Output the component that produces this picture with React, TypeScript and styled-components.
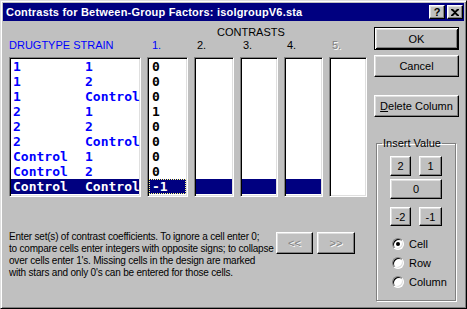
import React from 'react'
import styled, { createGlobalStyle } from 'styled-components'

const GlobalStyle = createGlobalStyle`
  html, body { margin: 0; padding: 0; background: #c0c0c0; }
  body { font-family: "Liberation Sans", Arial, sans-serif; font-size: 11px; }
  * { box-sizing: border-box; }
`

// classic 3D edges
const raisedEdge = `
  border: 1px solid;
  border-color: #fff #000 #000 #fff;
  box-shadow: inset -1px -1px #808080, inset 1px 1px #dfdfdf;
`
const sunkenEdge = `
  border: 1px solid;
  border-color: #808080 #fff #fff #808080;
  box-shadow: inset 1px 1px #000, inset -1px -1px #dfdfdf;
`

const rows: [string, string][] = [
  ['1', '1'], ['1', '2'], ['1', 'Control'],
  ['2', '1'], ['2', '2'], ['2', 'Control'],
  ['Control', '1'], ['Control', '2'], ['Control', 'Control'],
]
const firstContrast = ['0', '0', '0', '1', '0', '0', '0', '0', '-1']
const selectedRow = 8

const contrastCols = [
  { label: '1.', width: 41, values: firstContrast, highlight: true, enabled: true, blue: true },
  { label: '2.', width: 40, values: [], highlight: true, enabled: true, blue: false },
  { label: '3.', width: 38, values: [], highlight: true, enabled: true, blue: false },
  { label: '4.', width: 39, values: [], highlight: true, enabled: true, blue: false },
  { label: '5.', width: 38, values: [], highlight: false, enabled: false, blue: false },
]

const Window = styled.div`
  width: 467px;
  height: 309px;
  background: #c0c0c0;
  border: 1px solid;
  border-color: #dfdfdf #000 #000 #dfdfdf;
  box-shadow: inset 1px 1px #fff, inset -1px -1px #808080;
  padding: 2px;
  display: flex;
  flex-direction: column;
`

const TitleBar = styled.div`
  height: 18px;
  background: #000080;
  display: flex;
  align-items: center;
  padding: 0 1px 0 3px;
`

const TitleText = styled.div`
  flex: 1;
  color: #fff;
  font-weight: bold;
  font-size: 11px;
  letter-spacing: 0.2px;
  white-space: nowrap;
`

const TitleButton = styled.div<{ $gap?: number }>`
  width: 16px;
  height: 14px;
  margin-left: ${p => p.$gap ?? 0}px;
  background: #c0c0c0;
  ${raisedEdge}
  display: flex;
  align-items: center;
  justify-content: center;
  font-weight: bold;
  font-size: 11px;
  color: #000;
  line-height: 1;
`

const Content = styled.div`
  display: flex;
  padding-left: 6px;
`

const LeftArea = styled.div`
  width: 358px;
  display: flex;
  flex-direction: column;
`

const ContrastsTitle = styled.div`
  margin-top: 5px;
  height: 13px;
  line-height: 13px;
  padding-left: 208px;
  color: #000;
`

const HeaderRow = styled.div`
  display: flex;
  gap: 6px;
  height: 13px;
  line-height: 13px;
  margin-bottom: 5px;
`

const HeaderCell = styled.div<{ $width: number; $pad: number; $tone: 'blue' | 'black' | 'off' }>`
  width: ${p => p.$width}px;
  padding-left: ${p => p.$pad}px;
  white-space: nowrap;
  color: ${p => (p.$tone === 'blue' ? '#0000ff' : p.$tone === 'off' ? '#808080' : '#000')};
  text-shadow: ${p => (p.$tone === 'off' ? '1px 1px #fff' : 'none')};
`

const ListsRow = styled.div`
  display: flex;
  gap: 6px;
  height: 140px;
`

const ListBox = styled.div<{ $width: number }>`
  width: ${p => p.$width}px;
  height: 100%;
  background: #fff;
  ${sunkenEdge}
  padding: 1px;
  overflow: hidden;
`

const ListRow = styled.div<{ $selected: boolean; $focus?: boolean; $ink: string }>`
  height: 15px;
  line-height: 15px;
  display: flex;
  padding-left: 2px;
  font-family: "DejaVu Sans Mono", "Liberation Mono", monospace;
  font-weight: bold;
  font-size: 13px;
  white-space: nowrap;
  background: ${p => (p.$selected ? '#000080' : 'transparent')};
  color: ${p => (p.$selected ? '#fff' : p.$ink)};
  outline: ${p => (p.$focus ? '1px dotted #ffff80' : 'none')};
  outline-offset: -1px;
`

const FactorCell = styled.span`
  width: 72px;
  flex-shrink: 0;
`

const ValueCell = styled.span`
  padding-left: 1px;
`

const BottomRow = styled.div`
  display: flex;
  margin-top: 34px;
`

const Description = styled.div`
  width: 267px;
  font-size: 10px;
  line-height: 12px;
  letter-spacing: -0.2px;
  color: #000;
  white-space: nowrap;
`

const NavButtons = styled.div`
  display: flex;
  gap: 4px;
  margin-top: 1px;
`

const PushButton = styled.div<{ $h: number; $w?: number; $top?: number; $default?: boolean; $disabled?: boolean; $span?: boolean }>`
  height: ${p => p.$h}px;
  width: ${p => (p.$w ? `${p.$w}px` : 'auto')};
  margin-top: ${p => p.$top ?? 0}px;
  grid-column: ${p => (p.$span ? 'span 2' : 'auto')};
  background: #c0c0c0;
  display: flex;
  align-items: center;
  justify-content: center;
  font-size: 11px;
  white-space: nowrap;
  color: ${p => (p.$disabled ? '#808080' : '#000')};
  text-shadow: ${p => (p.$disabled ? '1px 1px #fff' : 'none')};
  ${p =>
    p.$default
      ? `border: 1px solid #000;
         box-shadow: inset 1px 1px #fff, inset -1px -1px #000, inset 2px 2px #dfdfdf, inset -2px -2px #808080;`
      : raisedEdge}
`

const RightColumn = styled.div`
  width: 85px;
  margin-left: 7px;
  display: flex;
  flex-direction: column;
`

const GroupBox = styled.fieldset`
  margin: 20px 3px 0 2px;
  padding: 0 0 0 13px;
  min-width: 0;
  height: 164px;
  border: 1px solid #808080;
  box-shadow: 1px 1px 0 #fff, inset 1px 1px 0 #fff;
`

const GroupLegend = styled.legend`
  margin-left: -8px;
  padding: 0 1px;
  height: 13px;
  line-height: 13px;
  font-size: 11px;
  color: #000;
`

const ValueGrid = styled.div`
  display: grid;
  grid-template-columns: 21px 23px;
  column-gap: 8px;
  row-gap: 3px;
  margin-top: 6px;
`

const RadioList = styled.div`
  display: flex;
  flex-direction: column;
  margin-top: 8px;
  margin-left: 2px;
`

const RadioRow = styled.div`
  height: 19px;
  display: flex;
  align-items: center;
  font-size: 11px;
  color: #000;
`

const RadioCircle = styled.span<{ $checked: boolean }>`
  position: relative;
  width: 12px;
  height: 12px;
  border-radius: 50%;
  background: #fff;
  border: 1px solid;
  border-color: #808080 #fff #fff #808080;
  box-shadow: inset 1px 1px #000, inset -1px -1px #dfdfdf;
  margin-right: 5px;
  &::after {
    content: '';
    display: ${p => (p.$checked ? 'block' : 'none')};
    position: absolute;
    left: 3px;
    top: 3px;
    width: 4px;
    height: 4px;
    border-radius: 50%;
    background: #000;
  }
`

const Underline = styled.span`
  text-decoration: underline;
`

const CloseGlyph = () => (
  <svg width="8" height="7" viewBox="0 0 8 7">
    <path d="M0 0h2l2 2 2-2h2v1L5 3.5 8 6v1H6L4 5 2 7H0V6l3-2.5L0 1z" fill="#000" />
  </svg>
)

export default function App() {
  return (
    <>
      <GlobalStyle />
      <Window>
        <TitleBar>
          <TitleText>Contrasts for Between-Group Factors: isolgroupV6.sta</TitleText>
          <TitleButton>?</TitleButton>
          <TitleButton $gap={2}><CloseGlyph /></TitleButton>
        </TitleBar>
        <Content>
          <LeftArea>
            <ContrastsTitle>CONTRASTS</ContrastsTitle>
            <HeaderRow>
              <HeaderCell $width={132} $pad={0} $tone="blue">DRUGTYPE STRAIN</HeaderCell>
              {contrastCols.map((c, i) => (
                <HeaderCell key={c.label} $width={c.width} $pad={i === 0 ? 5 : 3}
                  $tone={c.blue ? 'blue' : c.enabled ? 'black' : 'off'}>
                  {c.label}
                </HeaderCell>
              ))}
            </HeaderRow>
            <ListsRow>
              <ListBox $width={132}>
                {rows.map(([drug, strain], i) => (
                  <ListRow key={i} $selected={i === selectedRow} $ink="#0000ff">
                    <FactorCell>{drug}</FactorCell>
                    <span>{strain}</span>
                  </ListRow>
                ))}
              </ListBox>
              {contrastCols.map((c, ci) => (
                <ListBox key={c.label} $width={c.width}>
                  {rows.map((_, i) => (
                    <ListRow key={i} $ink="#000"
                      $selected={c.highlight && i === selectedRow}
                      $focus={ci === 0 && i === selectedRow}>
                      <ValueCell>{c.values[i] ?? ''}</ValueCell>
                    </ListRow>
                  ))}
                </ListBox>
              ))}
            </ListsRow>
            <BottomRow>
              <Description>
                Enter set(s) of contrast coefficients. To ignore a cell enter 0;<br />
                to compare cells enter integers with opposite signs; to collapse<br />
                over cells enter 1's. Missing cells in the design are marked<br />
                with stars and only 0's can be entered for those cells.
              </Description>
              <NavButtons>
                <PushButton $h={22} $w={37} $disabled>&lt;&lt;</PushButton>
                <PushButton $h={22} $w={38} $disabled>&gt;&gt;</PushButton>
              </NavButtons>
            </BottomRow>
          </LeftArea>
          <RightColumn>
            <PushButton $h={23} $top={6} $default>OK</PushButton>
            <PushButton $h={22} $top={5}>Cancel</PushButton>
            <PushButton $h={22} $top={18}><Underline>D</Underline>elete Column</PushButton>
            <GroupBox>
              <GroupLegend>Insert Value</GroupLegend>
              <ValueGrid>
                <PushButton $h={20}>2</PushButton>
                <PushButton $h={20}>1</PushButton>
                <PushButton $h={20} $span>0</PushButton>
                <PushButton $h={19} $top={5}>-2</PushButton>
                <PushButton $h={19} $top={5}>-1</PushButton>
              </ValueGrid>
              <RadioList>
                <RadioRow><RadioCircle $checked />Cell</RadioRow>
                <RadioRow><RadioCircle $checked={false} />Row</RadioRow>
                <RadioRow><RadioCircle $checked={false} />Column</RadioRow>
              </RadioList>
            </GroupBox>
          </RightColumn>
        </Content>
      </Window>
    </>
  )
}
